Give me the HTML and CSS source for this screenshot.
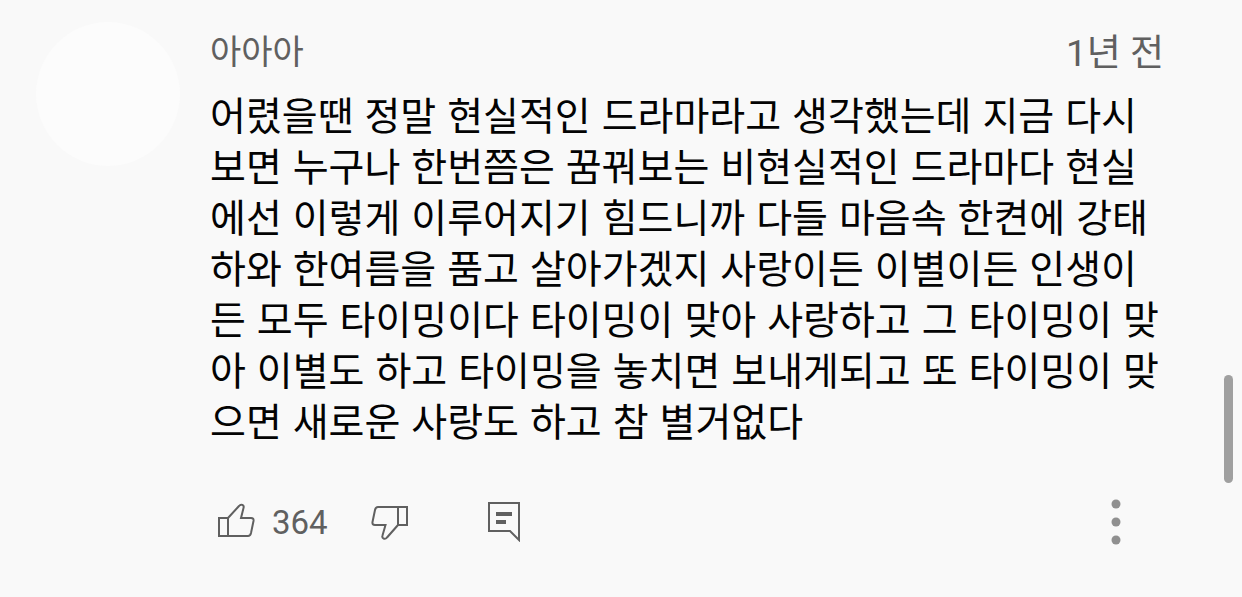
FILE: index.html
```html
<!DOCTYPE html>
<html lang="ko">
<head>
<meta charset="utf-8">
<meta name="viewport" content="width=device-width, initial-scale=1">
<title>댓글</title>
<link rel="stylesheet" href="styles.css">
</head>
<body>
<main class="page">
  <article class="comment">
    <div class="avatar"></div>
    <div class="body">
      <header class="meta">
        <span class="author">아아아</span>
        <time class="date">1년 전</time>
      </header>
      <p class="text">어렸을땐 정말 현실적인 드라마라고 생각했는데 지금 다시<br>보면 누구나 한번쯤은 꿈꿔보는 비현실적인 드라마다 현실<br>에선 이렇게 이루어지기 힘드니까 다들 마음속 한켠에 강태<br>하와 한여름을 품고 살아가겠지 사랑이든 이별이든 인생이<br>든 모두 타이밍이다 타이밍이 맞아 사랑하고 그 타이밍이 맞<br>아 이별도 하고 타이밍을 놓치면 보내게되고 또 타이밍이 맞<br>으면 새로운 사랑도 하고 참 별거없다</p>
      <footer class="actions">
        <button class="action like" type="button" aria-label="좋아요">
          <svg class="icon" width="40" height="40" viewBox="0 0 40 40"><path d="M4 16H13V34H4ZM13 16L24 4C26 1.500 29.500 3 28.500 6L26 16H36Q39 16 38.500 19L36 31Q35.300 34 33 34H13"/></svg>
          <span class="count">364</span>
        </button>
        <button class="action dislike" type="button" aria-label="싫어요">
          <svg class="icon" width="40" height="40" viewBox="0 0 40 40"><path d="M38 23H29V5H38ZM29 23L18 35.500C16 38 12.500 36.500 13.500 33.500L16.500 23H6Q3 23 3.500 20L6 8Q6.700 5 9 5H29"/></svg>
        </button>
        <button class="action reply" type="button" aria-label="답글">
          <svg class="icon" width="40" height="40" viewBox="0 0 40 40"><path d="M4 1H34V38L25 29H4Z"/><path class="lines" d="M11 12H27M11 20H21"/></svg>
        </button>
        <button class="action more" type="button" aria-label="더보기">
          <svg class="dots" width="12" height="48" viewBox="0 0 12 48"><circle cx="6" cy="6" r="4.500"/><circle cx="6" cy="24" r="4.500"/><circle cx="6" cy="42" r="4.500"/></svg>
        </button>
      </footer>
    </div>
  </article>
  <div class="scrollbar"></div>
</main>
</body>
</html>
```
FILE: styles.css
```css
body { margin: 0; background: #f9f9f9; font-family: Roboto, "Noto Sans CJK KR", sans-serif; }
.page { position: relative; }
.comment { display: flex; gap: 30px; padding: 22px 78px 50px 36px; }
.avatar { flex: none; width: 144px; height: 144px; border-radius: 50%; background: #fcfcfc; }
.body { flex: 1; min-width: 0; }
.meta { display: flex; justify-content: space-between; align-items: center; height: 64px; color: #606060; }
.author { font-size: 34px; line-height: 40px; padding-bottom: 4px; }
.date { font-size: 37px; line-height: 40px; }
.text { margin: 4px 0 0; color: #030303; font-family: Inter, "Noto Sans CJK KR", sans-serif; font-size: 39px; line-height: 51px; white-space: nowrap; }
.actions { display: flex; align-items: center; margin-top: 51px; }
.action { display: flex; align-items: center; padding: 0; border: 0; background: none; color: #606060; font: inherit; }
.like { gap: 17px; margin-left: 5px; }
.count { font-size: 33px; }
.dislike { margin-left: 41px; }
.reply { margin-left: 76px; }
.more { margin-left: auto; margin-right: 42px; }
.icon { fill: none; stroke: #606060; stroke-width: 2; }
.lines { stroke-width: 4; }
.dots { fill: #909090; }
.scrollbar { position: absolute; right: 9px; top: 375px; width: 9px; height: 108px; border-radius: 5px; background: #a0a0a0; }
```
